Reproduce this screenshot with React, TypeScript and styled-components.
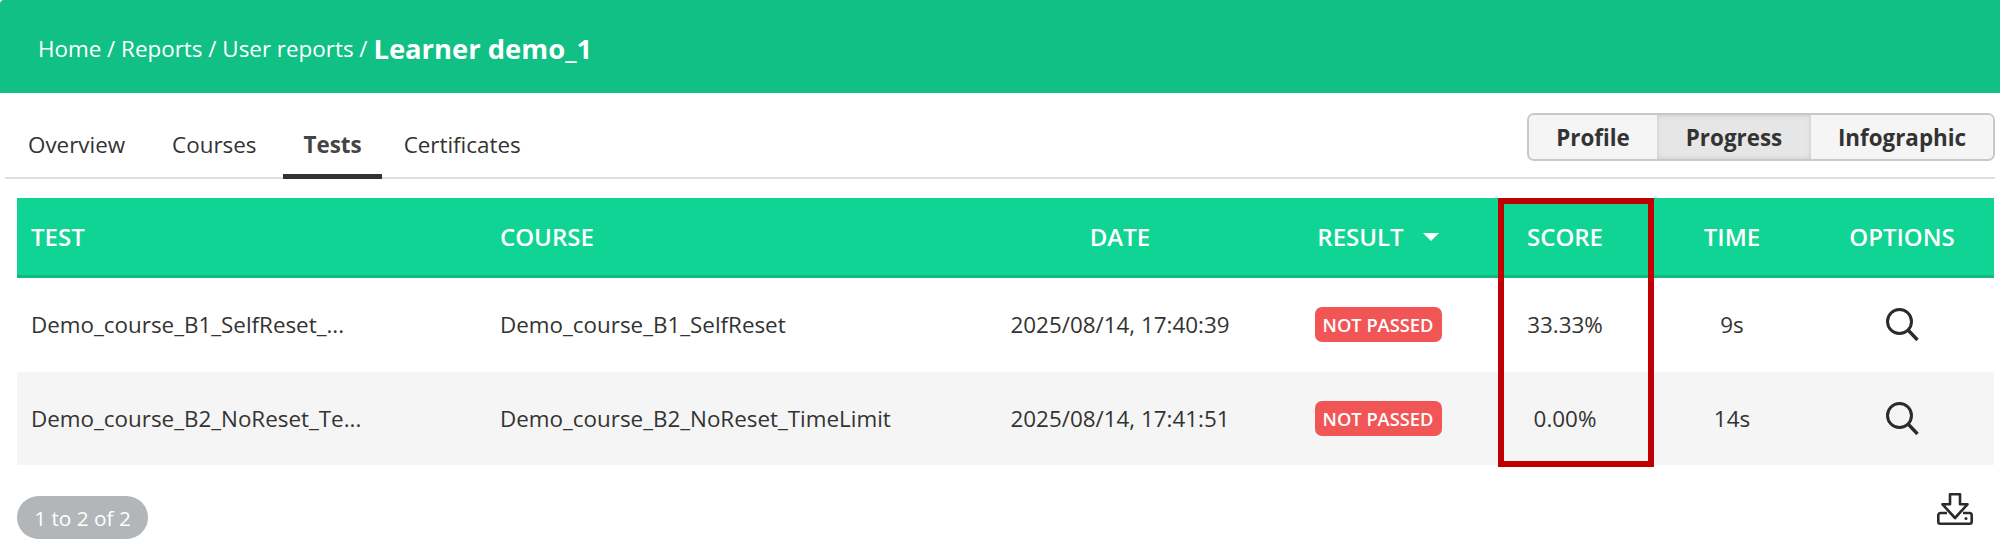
import { createGlobalStyle, styled } from "styled-components";

const GlobalStyle = createGlobalStyle`
    html, body {
        margin: 0;
        padding: 0;
        height: 539px;
        overflow: hidden;
        background: #fff;
        font-family: "Open Sans", "Liberation Sans", sans-serif;
        color: #333;
    }
`;

const Page = styled.div`
    width: 2000px;
    height: 539px;
    overflow: hidden;
`;
const TopBar = styled.header`
    height: 93px;
    background: #10c085;
    border-top-left-radius: 4px;
    display: flex;
    align-items: center;
    padding: 3px 38px 0;
    box-sizing: border-box;
    color: #fff;
    font-size: 22.4px;
    white-space: pre;
`;
const CurrentPage = styled.span`
    font-size: 27.4px;
    font-weight: 700;
`;
const TabRow = styled.div`
    height: 86px;
    margin: 0 5px 0 5px;
    padding: 0 0 0 3px;
    box-sizing: border-box;
    border-bottom: 2px solid #e0e0e0;
    display: flex;
    justify-content: space-between;
    align-items: flex-end;
`;
const Tabs = styled.nav`
    display: flex;
    gap: 7px;
`;
const Tab = styled.div<{ $active?: boolean }>`
    height: 59px;
    padding: 0 20px 6px;
    box-sizing: border-box;
    display: flex;
    align-items: center;
    font-size: 22.4px;
    font-weight: ${(p) => (p.$active ? 700 : 400)};
    color: ${(p) => (p.$active ? "#444" : "#333")};
    margin-bottom: -2px;
    border-bottom: 5px solid ${(p) => (p.$active ? "#333" : "transparent")};
`;
const LastTab = styled(Tab)`
    padding-left: 15px;
`;
const ButtonGroup = styled.div`
    display: flex;
    height: 48px;
    align-self: flex-start;
    margin-top: 20px;
    border: 2px solid #c8c8c8;
    border-radius: 7px;
    box-sizing: border-box;
    overflow: hidden;
`;
const GroupButton = styled.div<{ $active?: boolean; $width: number }>`
    width: ${(p) => p.$width}px;
    display: flex;
    align-items: center;
    justify-content: center;
    font-size: 22.4px;
    font-weight: 700;
    color: #333;
    background: ${(p) => (p.$active ? "#e6e6e6" : "#f5f5f5")};
    box-shadow: ${(p) => (p.$active ? "inset 0 0 5px rgba(0, 0, 0, 0.14)" : "none")};
`;
const TableArea = styled.div`
    position: relative;
    margin: 19px 6px 0 17px;
`;
const Row = styled.div`
    display: grid;
    grid-template-columns: 469px 474px 320px 196px 178px 156px 184px;
    align-items: center;
`;
const HeaderRow = styled(Row)`
    height: 80px;
    box-sizing: border-box;
    background: #10d493;
    border-bottom: 3px solid #10b982;
    color: #fff;
    font-size: 24px;
    font-weight: 600;
`;
const BodyRow = styled(Row)<{ $alt?: boolean }>`
    height: 93.5px;
    background: ${(p) => (p.$alt ? "#f5f5f5" : "#fff")};
    color: #333;
    font-size: 22.4px;
`;
const Cell = styled.div<{ $center?: boolean }>`
    padding: 0 14px;
    text-align: ${(p) => (p.$center ? "center" : "left")};
    display: flex;
    align-items: center;
    justify-content: ${(p) => (p.$center ? "center" : "flex-start")};
    white-space: nowrap;
`;
const SortArrow = styled.span`
    width: 0;
    height: 0;
    margin-left: 19px;
    border-left: 8px solid transparent;
    border-right: 8px solid transparent;
    border-top: 8px solid #fff;
`;
const Badge = styled.span`
    width: 127px;
    height: 35px;
    border-radius: 7px;
    background: #f25555;
    color: #fff;
    font-size: 18.3px;
    font-weight: 600;
    display: flex;
    align-items: center;
    justify-content: center;
`;
const Highlight = styled.div`
    position: absolute;
    left: 1481px;
    top: 0;
    width: 156px;
    height: 269px;
    border: 6px solid #c00000;
    box-sizing: border-box;
    pointer-events: none;
`;
const Footer = styled.div`
    margin: 31px 6px 0 17px;
    display: flex;
    justify-content: space-between;
    align-items: flex-start;
`;
const Pager = styled.div`
    width: 131px;
    height: 43px;
    border-radius: 22px;
    background: #b2b6b8;
    color: #fff;
    font-size: 20.8px;
    display: flex;
    align-items: center;
    justify-content: center;
`;
const DownloadButton = styled.div`
    margin: -3px 21px 0 0;
    line-height: 0;
`;

const SearchIcon = () => (
    <svg width="34" height="33" viewBox="0 0 34 33" fill="none" stroke="#2b2b2b" strokeWidth="3">
        <circle cx="14.5" cy="13.5" r="12" />
        <path d="M23.5 22.5l9 9.5" strokeWidth="3.4" />
    </svg>
);

const DownloadIcon = () => (
    <svg width="36" height="32" viewBox="0 0 36 32" fill="none" stroke="#2b2b2b" strokeWidth="2.6" strokeLinejoin="round">
        <path d="M13 1.300h10v10h7.500L18 25 5.500 11.300H13z" />
        <path d="M10 20H3.500a2.200 2.200 0 0 0-2.200 2.200v6.500a2 2 0 0 0 2 2h29.400a2 2 0 0 0 2-2v-6.500a2.200 2.200 0 0 0-2.200-2.200H26" />
        <circle cx="29" cy="25.500" r="1.500" fill="#2b2b2b" stroke="none" />
    </svg>
);

const rows = [
    {
        test: "Demo_course_B1_SelfReset_...",
        course: "Demo_course_B1_SelfReset",
        date: "2025/08/14, 17:40:39",
        score: "33.33%",
        time: "9s",
    },
    {
        test: "Demo_course_B2_NoReset_Te...",
        course: "Demo_course_B2_NoReset_TimeLimit",
        date: "2025/08/14, 17:41:51",
        score: "0.00%",
        time: "14s",
    },
];

export default function App() {
    return (
        <Page>
            <GlobalStyle />
            <TopBar>
                Home / Reports / User reports / <CurrentPage>Learner demo_1</CurrentPage>
            </TopBar>
            <TabRow>
                <Tabs>
                    <Tab>Overview</Tab>
                    <Tab>Courses</Tab>
                    <Tab $active>Tests</Tab>
                    <LastTab>Certificates</LastTab>
                </Tabs>
                <ButtonGroup>
                    <GroupButton $width={128}>Profile</GroupButton>
                    <GroupButton $width={154} $active>Progress</GroupButton>
                    <GroupButton $width={182}>Infographic</GroupButton>
                </ButtonGroup>
            </TabRow>
            <TableArea>
                <HeaderRow>
                    <Cell>TEST</Cell>
                    <Cell>COURSE</Cell>
                    <Cell $center>DATE</Cell>
                    <Cell $center>RESULT<SortArrow /></Cell>
                    <Cell $center>SCORE</Cell>
                    <Cell $center>TIME</Cell>
                    <Cell $center>OPTIONS</Cell>
                </HeaderRow>
                {rows.map((row, i) => (
                    <BodyRow key={row.test} $alt={i % 2 === 1}>
                        <Cell>{row.test}</Cell>
                        <Cell>{row.course}</Cell>
                        <Cell $center>{row.date}</Cell>
                        <Cell $center><Badge>NOT PASSED</Badge></Cell>
                        <Cell $center>{row.score}</Cell>
                        <Cell $center>{row.time}</Cell>
                        <Cell $center><SearchIcon /></Cell>
                    </BodyRow>
                ))}
                <Highlight />
            </TableArea>
            <Footer>
                <Pager>1 to 2 of 2</Pager>
                <DownloadButton><DownloadIcon /></DownloadButton>
            </Footer>
        </Page>
    );
}
